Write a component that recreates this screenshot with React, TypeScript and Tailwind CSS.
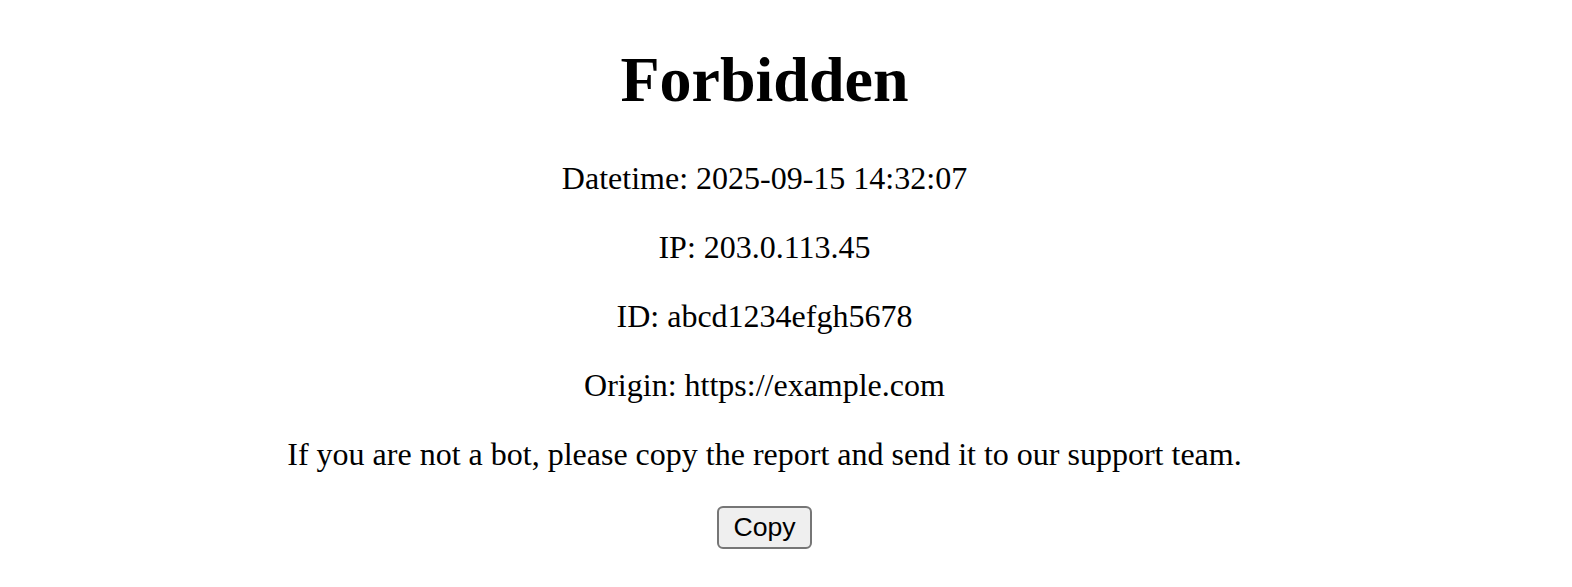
export default function App() {
  return (
    <div className="flow-root w-[1529px] px-[16px] text-center text-black bg-white" style={{ fontFamily: '"Liberation Serif", "Times New Roman", serif' }}>
      <h1 className="text-[64px] font-bold leading-[normal] mt-[42.88px] mb-[42.88px]">Forbidden</h1>
      <p className="text-[32px] leading-[normal] my-[32px]">Datetime: 2025-09-15 14:32:07</p>
      <p className="text-[32px] leading-[normal] my-[32px]">IP: 203.0.113.45</p>
      <p className="text-[32px] leading-[normal] my-[32px]">ID: abcd1234efgh5678</p>
      <p className="text-[32px] leading-[normal] my-[32px]">Origin: https://example.com</p>
      <p className="text-[32px] leading-[normal] my-[32px]">If you are not a bot, please copy the report and send it to our support team.</p>
      <button
        className="text-[26.67px] leading-[normal] text-black bg-[#efefef] border-[2px] border-solid border-[#767676] rounded-[6px] px-[14px] py-[4px] mt-[1px]"
        style={{ fontFamily: '"Liberation Sans", Arial, sans-serif' }}
      >
        Copy
      </button>
    </div>
  );
}
